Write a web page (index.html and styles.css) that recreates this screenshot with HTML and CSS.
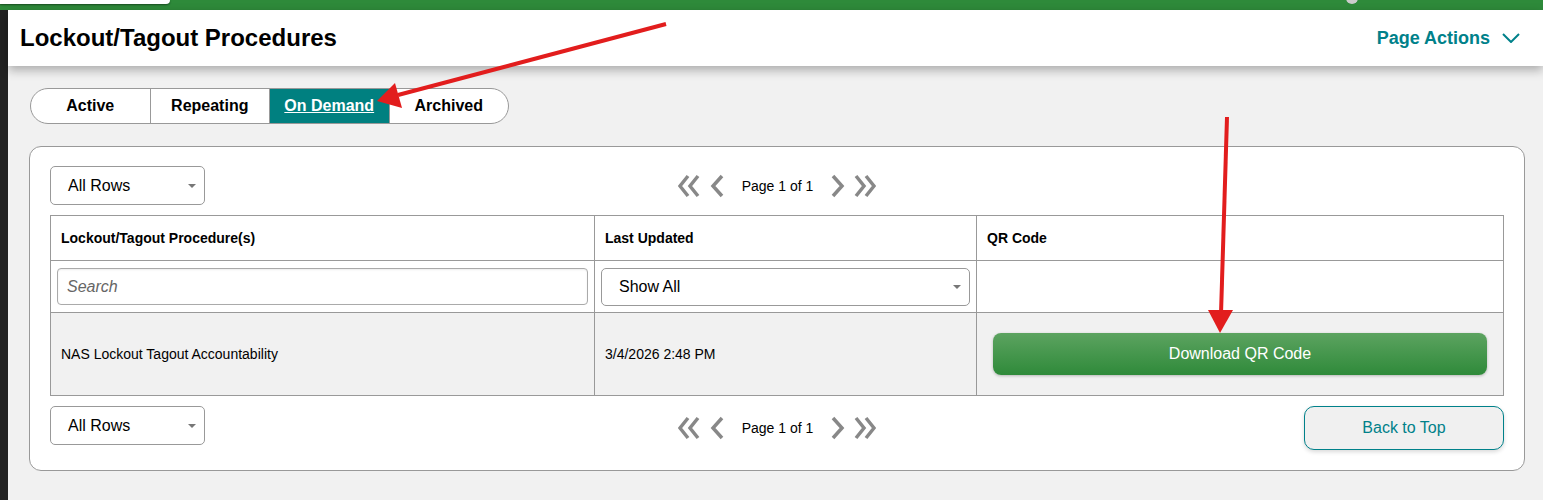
FILE: index.html
```html
<!DOCTYPE html>
<html lang="en">

<head>
    <meta charset="UTF-8">
    <meta name="viewport" content="width=device-width, initial-scale=1.0">
    <title>Lockout/Tagout Procedures</title>
    <link rel="stylesheet" href="styles.css">
</head>

<body>
    <div class="topbar">
        <div class="topbar-tab"></div>
        <div class="topbar-avatar"></div>
    </div>

    <div class="shell">
        <div class="rail"></div>

        <div class="main">
            <header class="page-header">
                <h1>Lockout/Tagout Procedures</h1>
                <div class="page-actions">
                    <span>Page Actions</span>
                    <svg width="18" height="10" viewBox="0 0 18 10">
                        <polyline points="1,1 9,9 17,1" fill="none" stroke="currentColor" stroke-width="2" />
                    </svg>
                </div>
            </header>

            <div class="content">
                <nav class="tabs">
                    <a class="tab" href="#">Active</a>
                    <a class="tab" href="#">Repeating</a>
                    <a class="tab selected" href="#">On Demand</a>
                    <a class="tab" href="#">Archived</a>
                </nav>

                <section class="card">
                    <div class="toolbar">
                        <div class="select rows-select">All Rows</div>
                        <div class="pager">
                            <svg class="chev-double" viewBox="0 0 22 24">
                                <polyline points="10,2 2,12 10,22" />
                                <polyline points="20,2 12,12 20,22" />
                            </svg>
                            <svg class="chev" viewBox="0 0 16 24">
                                <polyline points="13,2 4,12 13,22" />
                            </svg>
                            <span class="pager-label">Page 1 of 1</span>
                            <svg class="chev" viewBox="0 0 16 24">
                                <polyline points="3,2 12,12 3,22" />
                            </svg>
                            <svg class="chev-double" viewBox="0 0 22 24">
                                <polyline points="2,2 10,12 2,22" />
                                <polyline points="12,2 20,12 12,22" />
                            </svg>
                        </div>
                        <div></div>
                    </div>

                    <table class="grid">
                        <colgroup>
                            <col class="col-name">
                            <col class="col-date">
                            <col>
                        </colgroup>
                        <thead>
                            <tr class="head-row">
                                <th>Lockout/Tagout Procedure(s)</th>
                                <th>Last Updated</th>
                                <th>QR Code</th>
                            </tr>
                            <tr class="filter-row">
                                <td><input class="search" type="text" placeholder="Search"></td>
                                <td><div class="select date-select">Show All</div></td>
                                <td></td>
                            </tr>
                        </thead>
                        <tbody>
                            <tr class="data-row">
                                <td>NAS Lockout Tagout Accountability</td>
                                <td>3/4/2026 2:48 PM</td>
                                <td class="qr-cell"><button class="btn-download">Download QR Code</button></td>
                            </tr>
                        </tbody>
                    </table>

                    <div class="toolbar">
                        <div class="select rows-select">All Rows</div>
                        <div class="pager">
                            <svg class="chev-double" viewBox="0 0 22 24">
                                <polyline points="10,2 2,12 10,22" />
                                <polyline points="20,2 12,12 20,22" />
                            </svg>
                            <svg class="chev" viewBox="0 0 16 24">
                                <polyline points="13,2 4,12 13,22" />
                            </svg>
                            <span class="pager-label">Page 1 of 1</span>
                            <svg class="chev" viewBox="0 0 16 24">
                                <polyline points="3,2 12,12 3,22" />
                            </svg>
                            <svg class="chev-double" viewBox="0 0 22 24">
                                <polyline points="2,2 10,12 2,22" />
                                <polyline points="12,2 20,12 12,22" />
                            </svg>
                        </div>
                        <button class="btn-top">Back to Top</button>
                    </div>
                </section>
            </div>
        </div>
    </div>

    <!-- red callout arrows drawn on top of the page -->
    <svg class="callouts" width="1543" height="500" viewBox="0 0 1543 500">
        <line x1="666" y1="24" x2="398" y2="95" />
        <polygon points="377,101 395,83 402,108" />
        <line x1="1227" y1="117" x2="1221" y2="314" />
        <polygon points="1220,333 1208,310 1233,310" />
    </svg>
</body>

</html>
```

FILE: styles.css
```css
body {
    font-family: 'Liberation Sans', Arial, sans-serif;
    background-color: #f1f1f1;
    margin: 0;
    padding: 0;
    color: #000;
    position: relative;
    overflow: hidden;
}

.topbar {
    height: 10px;
    background-color: #2e8a3a;
    position: relative;
    overflow: hidden;
}

.topbar-tab {
    position: absolute;
    left: 0;
    top: 0;
    width: 170px;
    height: 4px;
    background-color: #fff;
    border-bottom-right-radius: 8px;
    box-shadow: 0 1px 2px rgba(0, 0, 0, 0.45);
}

.topbar-avatar {
    position: absolute;
    left: 1346px;
    top: -8px;
    width: 12px;
    height: 12px;
    border-radius: 50%;
    background-color: #ccc;
}

.shell {
    display: flex;
    min-height: 490px;
}

.rail {
    width: 8px;
    background-color: #222;
}

.main {
    flex: 1;
}

.page-header {
    height: 56px;
    background-color: #fff;
    display: flex;
    align-items: center;
    justify-content: space-between;
    padding: 0 23px 0 12px;
    box-shadow: 0 4px 10px rgba(0, 0, 0, 0.3);
    position: relative;
}

.page-header h1 {
    margin: 0;
    font-size: 24px;
    font-weight: bold;
}

.page-actions {
    color: #00818a;
    font-weight: bold;
    font-size: 18px;
    display: flex;
    align-items: center;
    gap: 12px;
}

.content {
    padding: 22px 18px 0 21px;
}

.tabs {
    display: inline-flex;
    margin-left: 1px;
    border: 1px solid #999;
    border-radius: 18px;
    overflow: hidden;
    background-color: #fff;
}

.tab {
    width: 118.5px;
    line-height: 34px;
    text-align: center;
    font-size: 16px;
    font-weight: bold;
    color: #000;
    text-decoration: none;
    border-left: 1px solid #999;
}

.tab:first-child {
    border-left: none;
}

.tab.selected {
    background-color: #008080;
    color: #fff;
    text-decoration: underline;
}

.card {
    margin-top: 22px;
    background-color: #fff;
    border: 1px solid #999;
    border-radius: 12px;
    padding: 19px 20px 20px 20px;
}

.toolbar {
    display: grid;
    grid-template-columns: 1fr auto 1fr;
    align-items: start;
}

.select {
    position: relative;
    box-sizing: border-box;
    height: 39px;
    border: 1px solid #999;
    border-radius: 5px;
    padding-left: 17px;
    display: flex;
    align-items: center;
    font-size: 16px;
    background-color: #fff;
}

.select::after {
    content: '';
    position: absolute;
    right: 8px;
    top: 50%;
    margin-top: -2px;
    border-left: 4px solid transparent;
    border-right: 4px solid transparent;
    border-top: 4px solid #777;
}

.rows-select {
    width: 155px;
}

.pager {
    align-self: center;
    display: flex;
    align-items: center;
    font-size: 14px;
}

.pager svg {
    height: 24px;
    fill: none;
    stroke: #888;
    stroke-width: 3.5;
}

.chev-double {
    width: 22px;
}

.chev {
    width: 16px;
    margin-left: 9px;
}

.pager-label {
    margin: 0 17px 0 17px;
}

.pager-label + .chev {
    margin-left: 0;
    margin-right: 8px;
}

.grid {
    width: 100%;
    margin: 10px 0;
    border-collapse: collapse;
}

.col-name {
    width: 544px;
}

.col-date {
    width: 382px;
}

.grid th,
.grid td {
    border: 1px solid #999;
    padding: 0 10px;
    text-align: left;
    font-size: 14px;
}

.head-row {
    height: 45px;
}

.filter-row {
    height: 52px;
}

.filter-row td {
    padding: 0 6px;
}

.search {
    box-sizing: border-box;
    width: 100%;
    height: 37px;
    border: 1px solid #aaa;
    border-radius: 4px;
    padding: 0 9px;
    font-family: inherit;
    font-size: 16px;
    font-style: italic;
    box-shadow: inset 0 1px 2px rgba(0, 0, 0, 0.08);
}

.search::placeholder {
    color: #666;
}

.date-select {
    height: 38px;
}

.data-row {
    height: 83px;
    background-color: #f1f1f1;
}

.grid .qr-cell {
    padding: 0 16px;
}

.btn-download {
    width: 100%;
    height: 42px;
    border: none;
    border-radius: 8px;
    background: linear-gradient(#5ca360, #2f8a3a);
    color: #fff;
    font-family: inherit;
    font-size: 16px;
    box-shadow: 0 1px 3px rgba(0, 0, 0, 0.25);
    cursor: pointer;
}

.btn-top {
    justify-self: end;
    width: 200px;
    height: 44px;
    border: 1px solid #00818a;
    border-radius: 10px;
    background-color: #f0f0f0;
    color: #00818a;
    font-family: inherit;
    font-size: 16px;
    box-shadow: 0 2px 4px rgba(0, 0, 0, 0.15);
    cursor: pointer;
}

.callouts {
    position: absolute;
    left: 0;
    top: 0;
    pointer-events: none;
}

.callouts line {
    stroke: #e21d1d;
    stroke-width: 4;
}

.callouts polygon {
    fill: #e21d1d;
}
```
